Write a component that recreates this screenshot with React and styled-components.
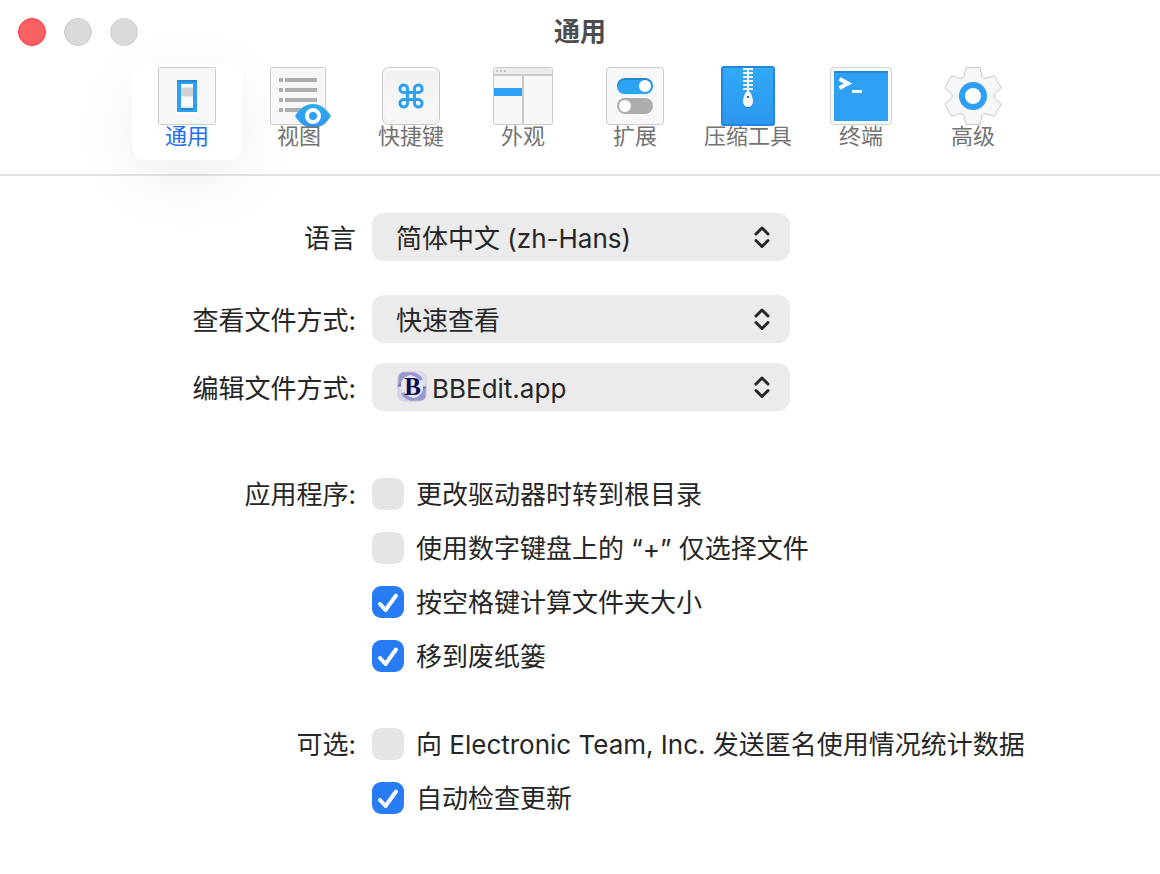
import {useState} from "react";
import styled, {createGlobalStyle} from "styled-components";

const GlobalStyle = createGlobalStyle`
  * {
    box-sizing: border-box;
  }

  body {
    margin: 0;
    background-color: #fff;
    color: #262626;
    font-family: Inter, "Noto Sans CJK SC", sans-serif;
    font-size: 26px;
  }
`

const Header = styled.header`
  border-bottom: 2px solid #e4e4e4;
  padding-bottom: 14px;
`

const TitleBar = styled.div`
  display: grid;
  grid-template-columns: 1fr auto 1fr;
  align-items: center;
  height: 64px;
  padding: 0 18px;
`

const Lights = styled.div`
  display: flex;
  gap: 18px;
`

const Light = styled.button`
  width: 28px;
  height: 28px;
  padding: 0;
  border-radius: 50%;
  border: 1px solid ${props => props.$active ? '#f2383d' : '#cdcdcd'};
  background-color: ${props => props.$active ? '#fb6063' : '#dadada'};
`

const Title = styled.h1`
  margin: 0;
  color: #4d4d4d;
  font-size: 26px;
  line-height: 32px;
  font-weight: bold;
`

const Tabs = styled.nav`
  display: flex;
  justify-content: center;
  gap: 2px;
`

const Tab = styled.button`
  display: flex;
  flex-direction: column;
  align-items: center;
  min-width: 110px;
  height: 96px;
  padding: 2px 12px 0;
  border: 0;
  border-radius: 14px;
  background-color: ${props => props.$active ? '#fff' : 'transparent'};
  box-shadow: ${props => props.$active ? '0 18px 64px rgba(0, 0, 0, .07)' : 'none'};
  color: ${props => props.$active ? '#1f6ff0' : '#737373'};
  font-family: inherit;
  font-size: 22px;
  line-height: 20px;
  white-space: nowrap;
`

const TabIcon = styled.svg`
  display: block;
  width: 64px;
  height: 60px;
  overflow: visible;
`

const Form = styled.main`
  display: grid;
  gap: 20px;
  padding: 37px 20px;
`

const Row = styled.div`
  display: grid;
  grid-template-columns: 7fr 16fr;
  column-gap: 16px;
  margin-top: ${props => props.$space || 0}px;
`

const RowLabel = styled.label`
  padding-top: ${props => props.$tall ? 4 : 2}px;
  text-align: right;
  line-height: ${props => props.$tall ? 44 : 30}px;
`

const SelectBox = styled.div`
  display: grid;
  align-items: center;
  width: 100%;
  max-width: 418px;

  > * {
    grid-area: 1 / 1;
  }

  > svg {
    pointer-events: none;
  }
`

const Select = styled.select`
  appearance: none;
  width: 100%;
  height: 48px;
  padding: 2px 48px 0 ${props => props.$icon ? 60 : 24}px;
  border: 0;
  border-radius: 12px;
  background-color: #ebebeb;
  color: inherit;
  font: inherit;
`

const Arrows = styled.svg`
  justify-self: end;
  width: 16px;
  height: 24px;
  margin-right: 20px;
`

const AppIcon = styled.svg`
  width: 30px;
  height: 32px;
  margin-left: 25px;
`

const Options = styled.div`
  display: grid;
  gap: 22px;
`

const Option = styled.label`
  display: flex;
  align-items: center;
  gap: 12px;
  line-height: 32px;
`

const OptionText = styled.span`
  padding-top: 2px;
  line-height: 30px;
`

const CheckBox = styled.span`
  display: grid;
  flex: none;

  > * {
    grid-area: 1 / 1;
  }

  svg {
    width: 32px;
    height: 32px;
    pointer-events: none;
  }
`

const Check = styled.input`
  appearance: none;
  width: 32px;
  height: 32px;
  margin: 0;
  border-radius: 9px;
  background-color: #e5e5e5;

  &:checked {
    background-color: #277bf4;
  }
`

// six teeth round the centre (32, 30)
function gearPath() {
    const tooth = [[-9, -19], [-7, -28.5], [7, -28.5], [9, -19]]
    const points = []
    for (let i = 0; i < 6; i++) {
        const a = i * Math.PI / 3
        tooth.forEach(([x, y]) => {
            const px = 32 + x * Math.cos(a) - y * Math.sin(a)
            const py = 30 + x * Math.sin(a) + y * Math.cos(a)
            points.push(px.toFixed(1) + ' ' + py.toFixed(1))
        })
    }
    return 'M' + points.join('L') + 'Z'
}

function Plate({x = 3.5, width = 57, r = 2}) {
    return <rect x={x} y="1.5" width={width} height="57" rx={r} fill="#f7f7f7" stroke="#cbcbcb"/>
}

const icons = {
    general: (<>
        <Plate r={1}/>
        <path d="M22 46h20v2H22z" fill="#fff"/>
        <path d="M22 14h20v32H22z" fill="#2ea0f4"/>
        <path d="M22 14h20v2H22z" fill="#2487cf"/>
        <path d="M26 42h12v2H26z" fill="#2487cf"/>
        <path d="M26 18h12v24H26z" fill="#fafafa"/>
        <path d="M26 21h12v1H26zM26 30h12v1H26zM26 40h12v2H26z" fill="#e6e6e6"/>
        <path d="M26 22h12v8H26z" fill="#d0d0d0"/>
    </>),
    view: (<>
        <defs>
            <linearGradient id="eye" x1="0" y1="0" x2="0" y2="1">
                <stop offset="0" stopColor="#2dade9"/>
                <stop offset="1" stopColor="#2f96f6"/>
            </linearGradient>
        </defs>
        <Plate width={55}/>
        <path d="M12 12h4v4h-4zM12 22h4v4h-4zM12 32h4v4h-4zM12 42h4v4h-4z" fill="#adadad"/>
        <path d="M18 12h32v4H18zM18 22h32v4H18zM18 32h32v4H18zM18 42h20v4H18z" fill="#adadad"/>
        <path d="M28 50C33 42 39 38 46 38S59 42 64 50C59 58 53 62 46 62S33 58 28 50Z" fill="url(#eye)"/>
        <circle cx="46" cy="50" r="6" fill="#2ea0f4" stroke="#fff" strokeWidth="4"/>
    </>),
    keys: (<>
        <defs>
            <linearGradient id="keycap" x1="0" y1="0" x2="0" y2="1">
                <stop offset="0" stopColor="#f0f0f0"/>
                <stop offset="1" stopColor="#f9f9f9"/>
            </linearGradient>
        </defs>
        <rect x="3.5" y="1.5" width="57" height="57" rx="6" fill="#f4f4f4" stroke="#c8c8c8"/>
        <path d="M8 3h48" stroke="#fff" strokeWidth="2"/>
        <rect x="6" y="5" width="52" height="49" rx="5" fill="url(#keycap)"/>
        <path
            d="M28.5 26.5H24.5A3.8 3.8 0 1 1 28.5 22.700V37.300A3.800 3.800 0 1 1 24.500 33.500H39.500A3.800 3.800 0 1 1 35.500 37.300V22.700A3.800 3.800 0 1 1 39.500 26.500Z"
            fill="none" stroke="#2ea0f4" strokeWidth="3"/>
    </>),
    look: (<>
        <Plate x={2.5} width={59}/>
        <path d="M3 3Q3 2 4 2H60Q61 2 61 3V8H3Z" fill="#ececec"/>
        <path d="M3 8h58v2H3zM31 10h2v48h-2z" fill="#cbcbcb"/>
        <path d="M5 4h2v2H5zM9 4h2v2H9zM13 4h2v2h-2z" fill="#c4c4c4"/>
        <path d="M3 22h28v8H3z" fill="#2ea0f4"/>
    </>),
    extensions: (<>
        <Plate r={3}/>
        <rect x="14" y="12" width="36" height="16" rx="8" fill="#2487cf"/>
        <path d="M14.500 22A8 8 0 0 1 22 14H42A8 8 0 0 1 49.500 22A8 8 0 0 1 42 28H22A8 8 0 0 1 14.500 22Z" fill="#2ea4f6"/>
        <rect x="14" y="32" width="36" height="16" rx="8" fill="#adadad"/>
        <circle cx="42" cy="20" r="6" fill="#fff"/>
        <circle cx="22" cy="40" r="6" fill="#fff"/>
    </>),
    archive: (<>
        <defs>
            <linearGradient id="zip" x1="0" y1="0" x2="0" y2="1">
                <stop offset="0" stopColor="#30aaf8"/>
                <stop offset="1" stopColor="#2c97ee"/>
            </linearGradient>
        </defs>
        <rect x="6" y="1" width="52" height="58" rx="2" fill="url(#zip)" stroke="#2585dc" strokeWidth="2"/>
        <path d="M7 2h50v1H7z" fill="#30b2ef"/>
        <path d="M27 2h10v2H27zM27 6h10v2H27zM27 10h10v2H27zM27 14h10v2H27zM27 18h10v2H27zM27 22h10v2H27z" fill="#f5f5f5"/>
        <path d="M31 2h2v24h-2z" fill="#f5f5f5"/>
        <path d="M32 26C35 26 37 33 37 36.500S35 42 32 42S27 40 27 36.500S29 26 32 26Z" fill="#2178c2"/>
        <path d="M32 25C35 25 37 32 37 35.500S35 41 32 41S27 39 27 35.500S29 25 32 25Z" fill="#f5f5f5"/>
        <path d="M31 30h2v2h-2z" fill="#2178c2"/>
    </>),
    terminal: (<>
        <rect x="1.5" y="1.5" width="61" height="57" rx="3" fill="#f8f8f8" stroke="#ced3d6"/>
        <path d="M5 5h54v50H5z" fill="#2ea0f4"/>
        <path d="M5 5h54v2H5z" fill="#2487cf"/>
        <path d="M10.500 13L19 17.500L10.500 22" fill="none" stroke="#fff" strokeWidth="4"/>
        <path d="M23 24h10v3H23z" fill="#fff"/>
    </>),
    advanced: (<>
        <path d={gearPath()} fill="#f7f7f7" stroke="#c8c8c8" strokeLinejoin="round"/>
        <circle cx="32" cy="30" r="11" fill="#fff" stroke="#2ea0f4" strokeWidth="6"/>
    </>),
}

const tabs = [
    {id: 'general', label: '通用'},
    {id: 'view', label: '视图'},
    {id: 'keys', label: '快捷键'},
    {id: 'look', label: '外观'},
    {id: 'extensions', label: '扩展'},
    {id: 'archive', label: '压缩工具'},
    {id: 'terminal', label: '终端'},
    {id: 'advanced', label: '高级'},
]

function BBEditIcon() {
    return (
        <AppIcon viewBox="0 0 30 32" aria-hidden="true">
            <rect x="1" y="1" width="28" height="29" rx="6" fill="#9a98d0" stroke="#c2c2d0"/>
            <path d="M15 1H24Q29 1 29 7V15.500H15Z" fill="#dcdcee"/>
            <path d="M1 15.500H15V30H7Q1 30 1 24Z" fill="#d3d3ec"/>
            <circle cx="15" cy="15.500" r="11.500" fill="#e6e6f8"/>
            <path d="M15 1Q22 2 26 8L23 10Q19 5 15 5ZM15 30Q8 29 4 23L7 21Q11 26 15 26Z" fill="#9a98d0"/>
            <path d="M0 15.500L4 11V15.500ZM30 15.500L26 20V15.500Z" fill="#7f7cc0"/>
            <text x="15.500" y="24" textAnchor="middle" fontFamily="Liberation Serif, serif" fontWeight="bold"
                  fontSize="25" fill="#0b0b4a">B</text>
        </AppIcon>
    )
}

function PopUp({id, value, icon}) {
    return (
        <SelectBox>
            <Select id={id} $icon={!!icon}>
                <option>{value}</option>
            </Select>
            {icon}
            <Arrows viewBox="0 0 16 24" fill="none" stroke="#262626" strokeWidth="3"
                    strokeLinecap="round" strokeLinejoin="round" aria-hidden="true">
                <path d="M2 9L8 3L14 9M2 15.500L8 21.500L14 15.500"/>
            </Arrows>
        </SelectBox>
    )
}

function Toggle({label, on}) {
    const [checked, setChecked] = useState(!!on)
    return (
        <Option>
            <CheckBox>
                <Check type="checkbox" checked={checked} onChange={ev => setChecked(ev.target.checked)}/>
                {checked && (
                    <svg viewBox="0 0 32 32" fill="none" stroke="#fff" strokeWidth="4"
                         strokeLinecap="round" strokeLinejoin="round">
                        <path d="M8 18L13.500 24L24 9.500"/>
                    </svg>
                )}
            </CheckBox>
            <OptionText>{label}</OptionText>
        </Option>
    )
}

export default function App() {
    const [active, setActive] = useState('general')
    return (<>
        <GlobalStyle/>
        <Header>
            <TitleBar>
                <Lights>
                    <Light $active aria-label="关闭"/>
                    <Light aria-label="最小化"/>
                    <Light aria-label="缩放"/>
                </Lights>
                <Title>通用</Title>
            </TitleBar>
            <Tabs>
                {tabs.map(tab => (
                    <Tab key={tab.id} $active={tab.id === active} onClick={() => setActive(tab.id)}>
                        <TabIcon viewBox="0 0 64 60" aria-hidden="true">{icons[tab.id]}</TabIcon>
                        {tab.label}
                    </Tab>
                ))}
            </Tabs>
        </Header>
        <Form>
            <Row>
                <RowLabel $tall htmlFor="language">语言</RowLabel>
                <PopUp id="language" value="简体中文 (zh-Hans)"/>
            </Row>
            <Row $space={14}>
                <RowLabel $tall htmlFor="viewer">查看文件方式:</RowLabel>
                <PopUp id="viewer" value="快速查看"/>
            </Row>
            <Row>
                <RowLabel $tall htmlFor="editor">编辑文件方式:</RowLabel>
                <PopUp id="editor" value="BBEdit.app" icon={<BBEditIcon/>}/>
            </Row>
            <Row role="group" aria-labelledby="app-label" $space={47}>
                <RowLabel as="div" id="app-label">应用程序:</RowLabel>
                <Options>
                    <Toggle label="更改驱动器时转到根目录"/>
                    <Toggle label="使用数字键盘上的 “+” 仅选择文件"/>
                    <Toggle label="按空格键计算文件夹大小" on/>
                    <Toggle label="移到废纸篓" on/>
                </Options>
            </Row>
            <Row role="group" aria-labelledby="optional-label" $space={36}>
                <RowLabel as="div" id="optional-label">可选:</RowLabel>
                <Options>
                    <Toggle label="向 Electronic Team, Inc. 发送匿名使用情况统计数据"/>
                    <Toggle label="自动检查更新" on/>
                </Options>
            </Row>
        </Form>
    </>)
}
